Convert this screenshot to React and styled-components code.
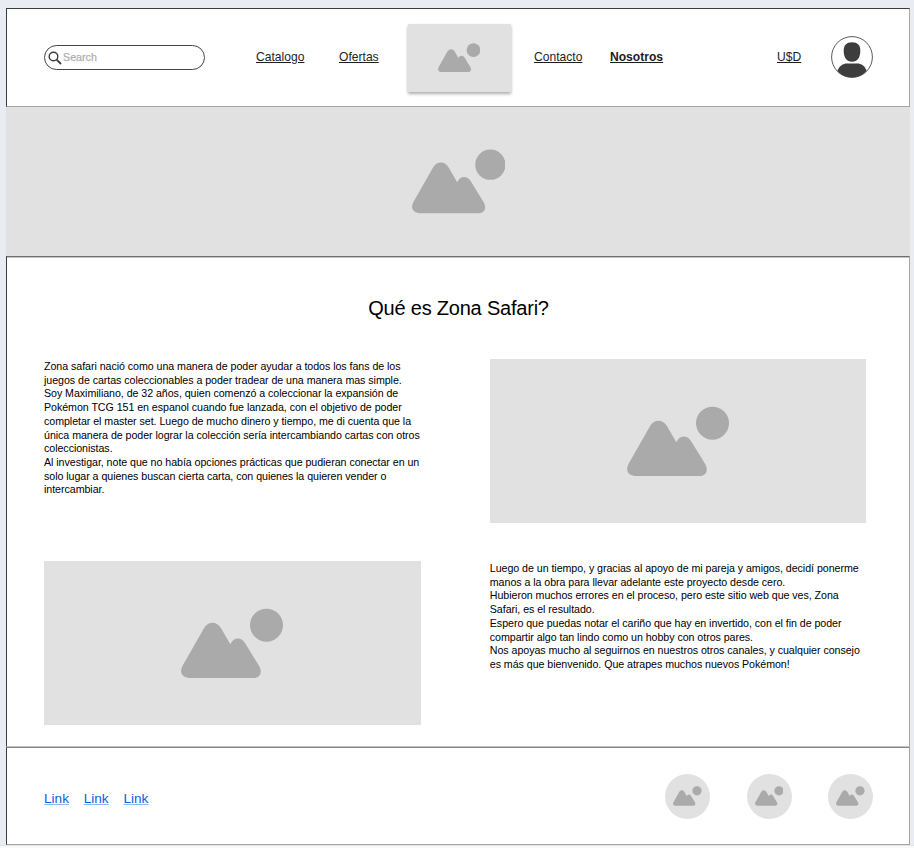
import React from "react";
import styled, { createGlobalStyle } from "styled-components";

const GlobalStyle = createGlobalStyle`
  * { box-sizing: border-box; }
  body {
    margin: 0;
    background: #e9edf3;
    font-family: "Liberation Sans", Helvetica, Arial, sans-serif;
    color: #000;
  }
`;

const Screen = styled.div`
  width: 914px;
  height: 848px;
  padding: 8px 4px 0 6px;
  overflow: hidden;
`;

const Header = styled.header`
  display: flex;
  align-items: center;
  width: 904px;
  height: 99px;
  padding: 0 36px 0 37px;
  background: #fff;
  border: 1px solid #a6a6a6;
  border-top-color: #3a3d40;
  border-left-color: #3a3d40;
`;

const SearchBox = styled.div`
  display: flex;
  align-items: center;
  flex: none;
  width: 161px;
  height: 25px;
  padding: 0 3px;
  border: 1px solid #454545;
  border-radius: 13px;
`;

const SearchIcon = styled.svg`
  width: 14px;
  height: 14px;
  margin-top: 1px;
`;

const SearchInput = styled.input`
  width: 120px;
  height: 20px;
  margin: -2px 0 0 1px;
  padding: 0;
  border: 0;
  outline: 0;
  background: none;
  font: 10.7px "Liberation Sans", Helvetica, Arial, sans-serif;
  &::placeholder {
    color: #b0b0b0;
    opacity: 1;
    -webkit-text-stroke: 0.25px #b0b0b0;
  }
`;

const NavLink = styled.a`
  flex: none;
  width: ${(p) => p.$width}px;
  margin-left: ${(p) => p.$gap}px;
  margin-top: -2px;
  color: #1d1d1d;
  font-size: 12.1px;
  font-weight: ${(p) => (p.$active ? 700 : 400)};
  line-height: 16px;
  white-space: nowrap;
  text-decoration: underline;
  text-decoration-thickness: 1px;
  text-underline-offset: 1px;
`;

const Logo = styled.div`
  display: flex;
  justify-content: center;
  align-items: center;
  flex: none;
  width: 103px;
  height: 68px;
  margin-left: 28.5px;
  background: #e1e1e1;
  box-shadow: 0 2px 3px rgba(0, 0, 0, 0.32);
`;

const Avatar = styled.svg`
  flex: none;
  width: 42px;
  height: 42px;
  margin-left: 29px;
  margin-top: -0.5px;
`;

const Picture = styled.svg`
  display: block;
  width: ${(p) => p.$size}px;
  height: ${(p) => (p.$size * 211) / 306}px;
  fill: #aaa;
`;

const Banner = styled.section`
  display: flex;
  justify-content: center;
  align-items: center;
  width: 904px;
  height: 149px;
  padding-left: 1px;
  background: #e1e1e1;
`;

const Content = styled.main`
  width: 904px;
  height: 491px;
  padding: 39px 42px 0 37px;
  background: #fff;
  border-top: 1px solid #707070;
  border-bottom: 1px solid #c4c4c4;
  border-left: 1px solid #3a3d40;
  border-right: 1px solid #a6a6a6;
  box-shadow: inset 0 1px 0 #c4c4c4;
`;

const Title = styled.h1`
  margin: 0 0 39px;
  padding-left: 6px;
  text-align: center;
  font-size: 20px;
  font-weight: 400;
  letter-spacing: -0.21px;
  line-height: 24px;
`;

const Grid = styled.div`
  display: grid;
  grid-template-columns: 376.5px 376.5px;
  column-gap: 69.3px;
  row-gap: 38px;
`;

const Photo = styled.div`
  display: flex;
  justify-content: center;
  align-items: center;
  height: 164px;
  background: #e1e1e1;
`;

const Story = styled.div`
  height: 164px;
  padding-top: 1px;
  font-size: 10.67px;
  line-height: 13.72px;
  white-space: nowrap;
`;

const Line = styled.div`
  letter-spacing: -0.05px;
`;

const Footer = styled.footer`
  display: flex;
  justify-content: space-between;
  align-items: center;
  width: 904px;
  height: 98px;
  padding: 0 36px 0 37px;
  background: #fff;
  border: 1px solid #a6a6a6;
  border-top-color: #858585;
  border-left-color: #3a3d40;
`;

const Links = styled.nav`
  display: flex;
  gap: 14.8px;
  padding-top: 5px;
`;

const FooterLink = styled.a`
  color: #0b62db;
  font-size: 13.6px;
  line-height: 18px;
  text-decoration: underline;
  text-decoration-color: #8fb9f2;
  text-decoration-thickness: 1px;
  text-underline-offset: 1px;
`;

const Socials = styled.div`
  display: flex;
  gap: 36.5px;
`;

const Social = styled.div`
  display: flex;
  justify-content: center;
  align-items: center;
  width: 45px;
  height: 45px;
  border-radius: 50%;
  background: #e1e1e1;
`;

const BottomStrip = styled.div`
  height: 4px;
  margin: 0 -4px 0 -6px;
  background: #f9f9f9;
  border-top: 1px solid #e2e4e6;
`;

function Mountains({ size }) {
  return (
    <Picture $size={size} viewBox="81 48 306 211">
      <path d="M112 258.500C84 258.500 74 242 87 219L149 110C162 87 188 86 202 110L229 157C238 135 261 134 273 153L316 223C326 242 318 258.500 299 258.500Z" />
      <circle cx="337.500" cy="99.500" r="49.500" />
    </Picture>
  );
}

const intro = [
  "Zona safari nació como una manera de poder ayudar a todos los fans de los",
  "juegos de cartas coleccionables a poder tradear de una manera mas simple.",
  "Soy Maximiliano, de 32 años, quien comenzó a coleccionar la expansión de",
  "Pokémon TCG 151 en espanol cuando fue lanzada, con el objetivo de poder",
  "completar el master set. Luego de mucho dinero y tiempo, me di cuenta que la",
  "única manera de poder lograr la colección sería intercambiando cartas con otros",
  "coleccionistas.",
  "Al investigar, note que no había opciones prácticas que pudieran conectar en un",
  "solo lugar a quienes buscan cierta carta, con quienes la quieren vender o",
  "intercambiar.",
];

const outcome = [
  "Luego de un tiempo, y gracias al apoyo de mi pareja y amigos, decidí ponerme",
  "manos a la obra para llevar adelante este proyecto desde cero.",
  "Hubieron muchos errores en el proceso, pero este sitio web que ves, Zona",
  "Safari, es el resultado.",
  "Espero que puedas notar el cariño que hay en invertido, con el fin de poder",
  "compartir algo tan lindo como un hobby con otros pares.",
  "Nos apoyas mucho al seguirnos en nuestros otros canales, y cualquier consejo",
  "es más que bienvenido. Que atrapes muchos nuevos Pokémon!",
];

function Paragraph({ lines }) {
  return (
    <Story>
      {lines.map((line) => (
        <Line key={line}>{line}</Line>
      ))}
    </Story>
  );
}

export default function App() {
  return (
    <Screen>
      <GlobalStyle />
      <Header>
        <SearchBox>
          <SearchIcon viewBox="0 0 14 14" fill="none" stroke="#3b3b3b">
            <circle cx="5.500" cy="5.500" r="4.300" strokeWidth="1.400" />
            <path d="M8.600 8.600L13 13" strokeWidth="1.800" />
          </SearchIcon>
          <SearchInput placeholder="Search" />
        </SearchBox>
        <NavLink $width={49} $gap={51}>Catalogo</NavLink>
        <NavLink $width={40} $gap={34}>Ofertas</NavLink>
        <Logo><Mountains size={42.3} /></Logo>
        <NavLink $width={49} $gap={23.5}>Contacto</NavLink>
        <NavLink $width={53} $gap={27} $active>Nosotros</NavLink>
        <NavLink $width={25} $gap={114}>U$D</NavLink>
        <Avatar viewBox="0 0 42 42">
          <circle cx="21" cy="21" r="20.400" fill="#fff" stroke="#4a4a4a" strokeWidth="0.900" />
          <path d="M21 6.200C26.500 6.200 29.300 9 29.300 14.800C29.300 21.500 26.500 25.700 21 25.700C15.500 25.700 12.700 21.500 12.700 14.800C12.700 9 15.500 6.200 21 6.200Z" fill="#3d3d3d" />
          <path d="M6.400 35C8.500 29.500 12 27.500 16 27.500H26C30.500 27.500 33.700 29.500 35.600 35C31.800 39.300 26.500 41.300 21 41.300C15.500 41.300 10 39.300 6.400 35Z" fill="#3d3d3d" />
        </Avatar>
      </Header>
      <Banner><Mountains size={93.5} /></Banner>
      <Content>
        <Title>Qué es Zona Safari?</Title>
        <Grid>
          <Paragraph lines={intro} />
          <Photo><Mountains size={102} /></Photo>
          <Photo><Mountains size={102} /></Photo>
          <Paragraph lines={outcome} />
        </Grid>
      </Content>
      <Footer>
        <Links>
          <FooterLink>Link</FooterLink>
          <FooterLink>Link</FooterLink>
          <FooterLink>Link</FooterLink>
        </Links>
        <Socials>
          <Social><Mountains size={28.6} /></Social>
          <Social><Mountains size={28.6} /></Social>
          <Social><Mountains size={28.6} /></Social>
        </Socials>
      </Footer>
      <BottomStrip />
    </Screen>
  );
}
